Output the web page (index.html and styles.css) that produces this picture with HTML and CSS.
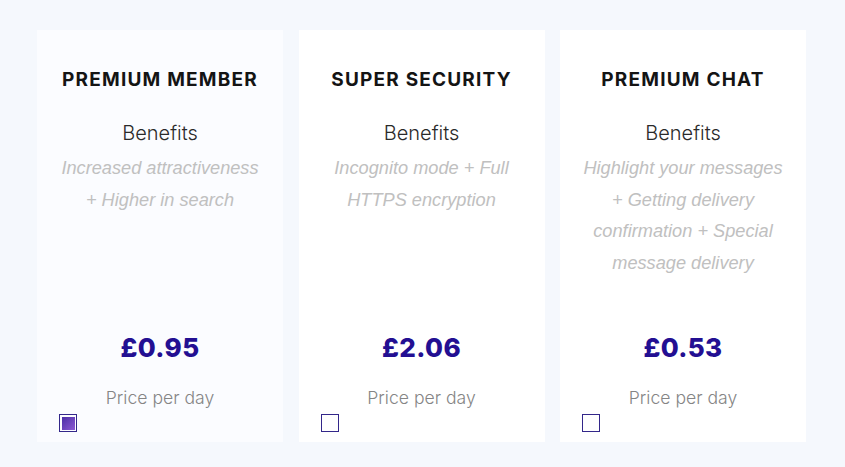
FILE: index.html
```html
<!DOCTYPE html>
<html>
<head>
<meta charset="utf-8">
<link rel="stylesheet" href="styles.css">
</head>
<body>
<div class="plans">
  <div class="card selected">
    <h2 class="title">PREMIUM MEMBER</h2>
    <div class="benefits">Benefits</div>
    <p class="desc">Increased attractiveness + Higher in search</p>
    <div class="price">£0.95</div>
    <div class="per">Price per day</div>
    <span class="check checked"><span class="fill"></span></span>
  </div>
  <div class="card">
    <h2 class="title">SUPER SECURITY</h2>
    <div class="benefits">Benefits</div>
    <p class="desc">Incognito mode + Full HTTPS encryption</p>
    <div class="price">£2.06</div>
    <div class="per">Price per day</div>
    <span class="check"></span>
  </div>
  <div class="card">
    <h2 class="title">PREMIUM CHAT</h2>
    <div class="benefits">Benefits</div>
    <p class="desc">Highlight your messages + Getting delivery confirmation + Special message delivery</p>
    <div class="price">£0.53</div>
    <div class="per">Price per day</div>
    <span class="check"></span>
  </div>
</div>
</body>
</html>
```

FILE: styles.css
```css
html, body {
  margin: 0;
  padding: 0;
  background: #f5f8fd;
}
body {
  width: 845px;
  height: 467px;
  overflow: hidden;
}
.plans {
  display: flex;
  gap: 15.5px;
  padding: 30px 0 0 37px;
}
.card {
  width: 246px;
  height: 412px;
  box-sizing: border-box;
  background: #ffffff;
  display: flex;
  flex-direction: column;
  align-items: center;
  padding: 39px 20px 10px;
  text-align: center;
}
.card.selected {
  background: #fbfcff;
}
.title {
  margin: 0;
  font-family: Inter, "Noto Sans", sans-serif;
  font-weight: 700;
  font-size: 19px;
  line-height: 22px;
  letter-spacing: 1.2px;
  color: #141414;
}
.benefits {
  margin-top: 30px;
  font-family: Inter, "Noto Sans", sans-serif;
  font-weight: 300;
  font-size: 20px;
  line-height: 24px;
  color: #2a2a2a;
}
.desc {
  margin: 8px 0 0;
  font-family: "Liberation Sans", Arial, sans-serif;
  font-style: italic;
  font-size: 18.2px;
  line-height: 31.5px;
  color: #c0c0c0;
}
.price {
  margin-top: auto;
  font-family: Inter, "Noto Sans", sans-serif;
  font-weight: 800;
  font-size: 26px;
  line-height: 32px;
  letter-spacing: 0.4px;
  color: #230f92;
}
.per {
  margin-top: 23px;
  font-family: Inter, "Noto Sans", sans-serif;
  font-weight: 300;
  font-size: 17.6px;
  line-height: 22px;
  color: #858585;
}
.check {
  align-self: flex-start;
  margin: 5px 0 0 2px;
  width: 18px;
  height: 18px;
  box-sizing: border-box;
  border: 1.5px solid #33278a;
  padding: 1.5px;
  display: block;
}
.check .fill {
  display: block;
  width: 100%;
  height: 100%;
  background: linear-gradient(135deg, #4a2ea6 0%, #8d5ad3 100%);
}
```
